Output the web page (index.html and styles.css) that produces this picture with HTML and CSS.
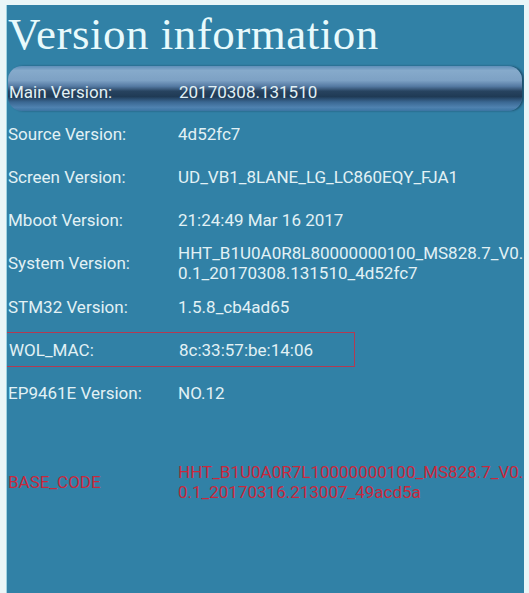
FILE: index.html
```html
<!DOCTYPE html>
<html>
<head>
<meta charset="utf-8">
<link rel="stylesheet" href="styles.css">
</head>
<body>
<div class="panel">
  <h1 class="title">Version information</h1>
  <div class="row main">
    <span class="label">Main Version:</span>
    <span class="value">20170308.131510</span>
  </div>
  <div class="row">
    <span class="label">Source Version:</span>
    <span class="value">4d52fc7</span>
  </div>
  <div class="row">
    <span class="label">Screen Version:</span>
    <span class="value">UD_VB1_8LANE_LG_LC860EQY_FJA1</span>
  </div>
  <div class="row">
    <span class="label">Mboot Version:</span>
    <span class="value">21:24:49 Mar 16 2017</span>
  </div>
  <div class="row tall">
    <span class="label">System Version:</span>
    <span class="value"><span class="line">HHT_B1U0A0R8L80000000100_MS828.7_V0.</span><span class="line">0.1_20170308.131510_4d52fc7</span></span>
  </div>
  <div class="row">
    <span class="label">STM32 Version:</span>
    <span class="value">1.5.8_cb4ad65</span>
  </div>
  <div class="row">
    <div class="boxed">
      <span class="label">WOL_MAC:</span>
      <span class="value">8c:33:57:be:14:06</span>
    </div>
  </div>
  <div class="row">
    <span class="label">EP9461E Version:</span>
    <span class="value">NO.12</span>
  </div>
  <div class="row tall red base">
    <span class="label">BASE_CODE</span>
    <span class="value"><span class="line">HHT_B1U0A0R7L10000000100_MS828.7_V0.</span><span class="line">0.1_20170316.213007_49acd5a</span></span>
  </div>
</div>
</body>
</html>
```
FILE: styles.css
```css
html, body {
  margin: 0;
  padding: 0;
  background: #eaf6f8;
  height: 100%;
  overflow: hidden;
}
.panel {
  margin: 5px 5px 0 6px;
  height: 588px;
  background: #3181a6;
  overflow: hidden;
  border-left: 1px solid #9fd3e2;
  box-sizing: border-box;
}
.title {
  margin: 0;
  height: 61px;
  padding: 5px 0 0 1px;
  box-sizing: border-box;
  font-family: "Liberation Serif", serif;
  font-weight: normal;
  font-size: 45px;
  line-height: 48px;
  color: #e8fafc;
  letter-spacing: 0.5px;
  white-space: nowrap;
}
.row {
  display: flex;
  align-items: center;
  height: 43px;
  padding-left: 1px;
  font-family: Roboto, "Liberation Sans", sans-serif;
  font-size: 17px;
  color: #e2f1f5;
  white-space: nowrap;
}
.label {
  width: 170px;
  flex: none;
}
.value {
  display: flex;
  flex-direction: column;
  line-height: 20px;
  overflow: hidden;
}
.line {
  display: block;
  height: 20px;
}
.main {
  height: 45px;
  margin: 0 0 1px 1px;
  padding-top: 6px;
  box-sizing: border-box;
  border-radius: 14px;
  background: linear-gradient(to bottom,
    #5f8fb9 0%,
    #86aacb 10%,
    #7da1c4 32%,
    #557aa3 45%,
    #27435f 56%,
    #1f3a55 68%,
    #3a6792 80%,
    #4f82b0 92%,
    #3b74a2 100%);
  box-shadow: 2px 0 2px rgba(10, 30, 50, 0.5);
  width: 514px;
}
.tall {
  height: 44px;
}
.boxed {
  display: flex;
  align-items: center;
  width: 349px;
  height: 35px;
  border: 1.5px solid #b23a52;
  box-sizing: border-box;
  margin-left: -2px;
}
.boxed .label {
  width: 170px;
  padding-left: 2px;
}
.base {
  margin-top: 46px;
}
.red {
  color: #c9283c;
}
```
